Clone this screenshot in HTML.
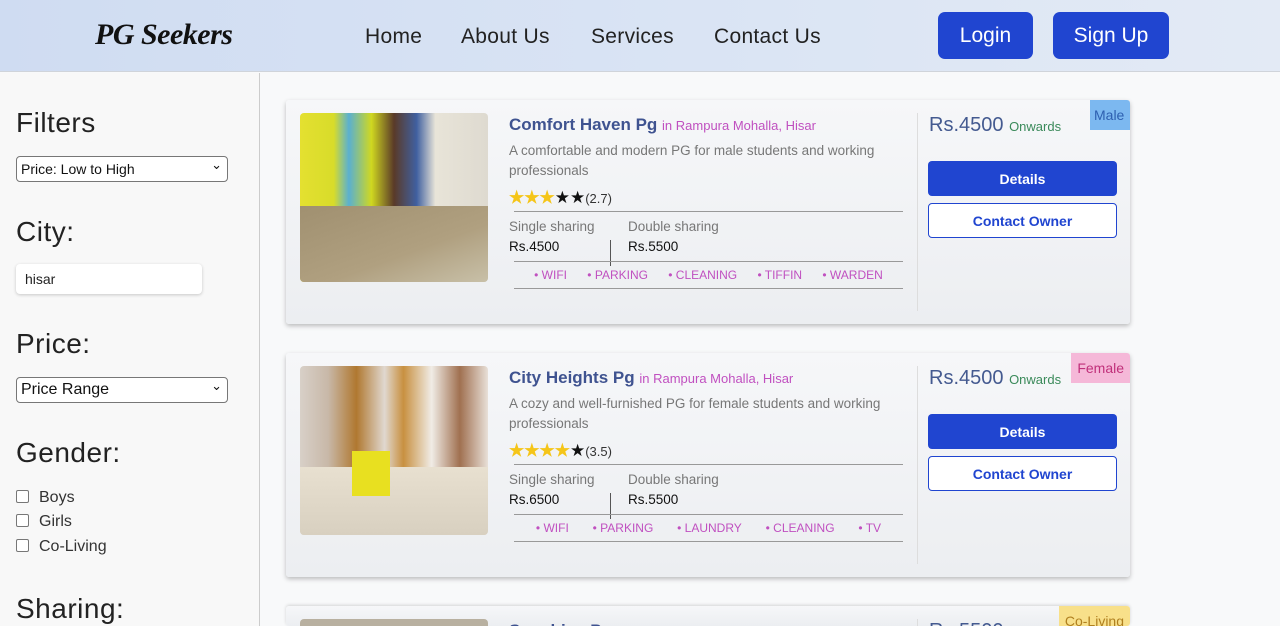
<!DOCTYPE html>
<html style="width:1280px;height:626px;overflow:hidden"><head><meta charset="utf-8"><style>
*{box-sizing:border-box;margin:0;padding:0}
body{width:1280px;height:626px;overflow:hidden;background:#f8f9fa;font-family:"Liberation Sans",sans-serif;position:relative}
.hdr{position:absolute;left:0;top:0;width:1280px;height:72px;background:linear-gradient(90deg,#cfdcf2,#dbe5f4 60%,#e3eaf5);border-bottom:1px solid #d0d4da}
.logo{position:absolute;left:95px;top:18px;font-family:"Liberation Serif",serif;font-style:italic;font-weight:bold;font-size:30px;color:#111;letter-spacing:-.5px}
.nav{position:absolute;top:25px;font-size:21px;color:#222;letter-spacing:.3px}
.btn{position:absolute;top:12px;height:47px;background:#2045d0;color:#fff;border-radius:7px;font-size:21px;text-align:center;line-height:48px}
.side{position:absolute;left:0;top:73px;width:260px;height:553px;border-right:1px solid #ccc;background:#f8f8f8}
.h{position:absolute;left:16px;font-size:28px;color:#222;letter-spacing:.5px}
.sel{position:absolute;left:16px;width:212px;height:26px;border:1px solid #777;border-radius:4px;background:#fff;font-size:14px;padding:4px 4px;color:#111}
.sel:after{content:"⌄";position:absolute;right:5px;top:0px;font-size:13px}
.cb{position:absolute;left:16px;font-size:16px;color:#333}
.cb i{display:inline-block;width:13px;height:13px;border:1px solid #777;border-radius:2px;vertical-align:-1px;margin-right:10px;background:#fff}
.card{position:absolute;left:286px;width:844px;height:224px;background:linear-gradient(180deg,#f6f7f9,#eceef1);box-shadow:0 2px 5px rgba(0,0,0,.25);border-radius:3px;overflow:hidden}
.img{position:absolute;left:14px;top:13px;width:188px;height:169px;border-radius:4px;overflow:hidden}
.t{position:absolute;left:223px;top:15px;font-size:17px;font-weight:bold;color:#3f5390}
.t span{font-size:13px;font-weight:normal;color:#c050c0}
.d{position:absolute;left:223px;top:41px;width:380px;font-size:13.5px;line-height:20px;color:#777}
.st{position:absolute;left:223px;top:88px;font-size:13px;color:#333}
.st b{color:#f5c518;font-size:17px;letter-spacing:0}.st s{text-decoration:none;color:#111;font-size:17px;letter-spacing:0}
.ln{position:absolute;left:228px;width:389px;border-top:1px solid #999}
.sh{position:absolute;top:117px;font-size:13.5px;color:#777;line-height:20px}
.sh b{color:#111;font-weight:normal}
.vl{position:absolute;left:324px;top:140px;height:26px;border-left:1px solid #555}
.am{position:absolute;left:228px;top:168px;width:389px;display:flex;justify-content:space-around;font-size:12px;color:#c050c0;padding:0 10px}
.vr{position:absolute;left:631px;top:13px;height:198px;border-left:1px solid #ddd}
.pr{position:absolute;left:643px;top:14px;font-size:20px;color:#445a90}
.pr span{font-size:13px;color:#3a8a5a}
.b1{position:absolute;left:642px;top:61px;width:189px;height:35px;background:#2045d0;color:#fff;border-radius:4px;text-align:center;line-height:36px;font-size:14px;font-weight:bold}
.b2{position:absolute;left:642px;top:103px;width:189px;height:35px;border:1px solid #2045d0;color:#2045d0;border-radius:4px;text-align:center;line-height:34px;font-size:14px;font-weight:bold;background:#fff}
.tag{position:absolute;right:0;top:0;height:30px;padding:0 6px;line-height:30px;font-size:14px}
</style></head><body>
<div class="hdr">
<div class="logo">PG Seekers</div>
<div class="nav" style="left:365px">Home</div>
<div class="nav" style="left:461px">About Us</div>
<div class="nav" style="left:591px">Services</div>
<div class="nav" style="left:714px">Contact Us</div>
<div class="btn" style="left:938px;width:95px">Login</div>
<div class="btn" style="left:1053px;width:116px">Sign Up</div>
</div>
<div class="side">
<div class="h" style="top:34px">Filters</div>
<div class="sel" style="top:83px">Price: Low to High</div>
<div class="h" style="top:143px">City:</div>
<div style="position:absolute;left:16px;top:191px;width:186px;height:30px;background:#fff;border-radius:4px;box-shadow:0 1px 3px rgba(0,0,0,.2);font-size:14px;padding:7px 9px;color:#222">hisar</div>
<div class="h" style="top:255px">Price:</div>
<div class="sel" style="top:304px;font-size:16px;padding-top:3px">Price Range</div>
<div class="h" style="top:364px">Gender:</div>
<div class="cb" style="top:416px"><i></i>Boys</div>
<div class="cb" style="top:440px"><i></i>Girls</div>
<div class="cb" style="top:465px"><i></i>Co-Living</div>
<div class="h" style="top:520px">Sharing:</div>
</div>

<div class="card" style="top:100px">
<div class="img" style="background:linear-gradient(90deg,#e4e030 0,#d8dc2a 18%,#5ab0d0 26%,#d0d820 38%,#5a3a28 50%,#4060a0 62%,#e8e4d8 72%,#dedad0 100%);"><div style="position:absolute;left:0;bottom:0;width:100%;height:45%;background:linear-gradient(160deg,#a09070,#b0a080 60%,#c8c0a8)"></div></div>
<div class="t">Comfort Haven Pg <span>in Rampura Mohalla, Hisar</span></div>
<div class="d">A comfortable and modern PG for male students and working professionals</div>
<div class="st"><b>★★★</b><s>★★</s>(2.7)</div>
<div class="ln" style="top:111px"></div>
<div class="sh" style="left:223px">Single sharing<br><b>Rs.4500</b></div>
<div class="vl"></div>
<div class="sh" style="left:342px">Double sharing<br><b>Rs.5500</b></div>
<div class="ln" style="top:161px"></div>
<div class="am"><span>• WIFI</span><span>• PARKING</span><span>• CLEANING</span><span>• TIFFIN</span><span>• WARDEN</span></div>
<div class="ln" style="top:188px"></div>
<div class="vr"></div>
<div class="pr">Rs.4500 <span>Onwards</span></div>
<div class="b1">Details</div><div class="b2">Contact Owner</div>
<div class="tag" style="background:#7cb8f0;color:#2d5fb0;width:40px;padding:0 4px">Male</div>
</div>

<div class="card" style="top:353px">
<div class="img" style="background:linear-gradient(90deg,#d8d0c8 0,#c8b8a8 15%,#b07830 30%,#e0d8d0 45%,#c89040 55%,#f0ece6 70%,#a07050 85%,#e8e0d8 100%);"><div style="position:absolute;left:0;bottom:0;width:100%;height:40%;background:linear-gradient(180deg,#e8e0d0,#d8d0c0)"></div><div style="position:absolute;left:52px;top:85px;width:38px;height:45px;background:#e8e020"></div></div>
<div class="t">City Heights Pg <span>in Rampura Mohalla, Hisar</span></div>
<div class="d">A cozy and well-furnished PG for female students and working professionals</div>
<div class="st"><b>★★★★</b><s>★</s>(3.5)</div>
<div class="ln" style="top:111px"></div>
<div class="sh" style="left:223px">Single sharing<br><b>Rs.6500</b></div>
<div class="vl"></div>
<div class="sh" style="left:342px">Double sharing<br><b>Rs.5500</b></div>
<div class="ln" style="top:161px"></div>
<div class="am"><span>• WIFI</span><span>• PARKING</span><span>• LAUNDRY</span><span>• CLEANING</span><span>• TV</span></div>
<div class="ln" style="top:188px"></div>
<div class="vr"></div>
<div class="pr">Rs.4500 <span>Onwards</span></div>
<div class="b1">Details</div><div class="b2">Contact Owner</div>
<div class="tag" style="background:#f5b8d8;color:#c0307a">Female</div>
</div>

<div class="card" style="top:606px;height:20px;box-shadow:0 -1px 3px rgba(0,0,0,.15)">
<div class="img" style="background:#b8b0a0"></div>
<div class="t">Sunshine Pg</div>
<div class="vr"></div>
<div class="pr">Rs.5500</div>
<div class="tag" style="background:#f8e08a;color:#b08020">Co-Living</div>
</div>
</body></html>
